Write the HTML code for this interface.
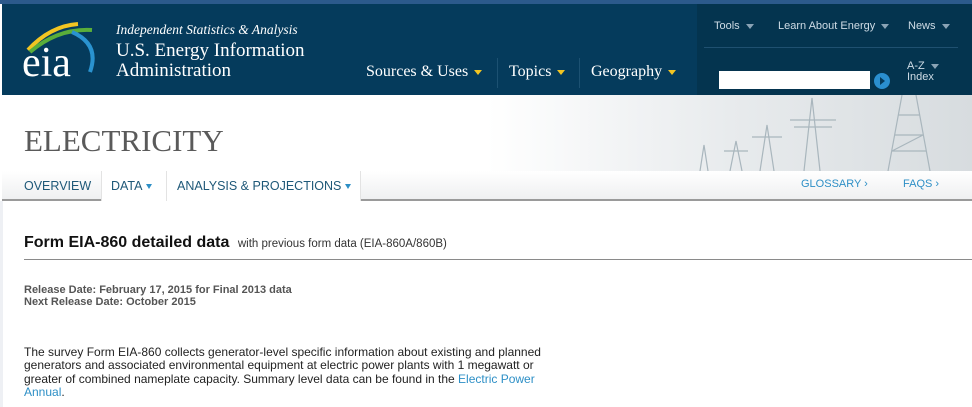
<!DOCTYPE html>
<html><head><style>
*{margin:0;padding:0;box-sizing:border-box}
body{width:972px;height:407px;overflow:hidden;background:#fff;font-family:"Liberation Sans",Arial,sans-serif;position:relative}
.top{position:absolute;left:0;top:0;width:972px;height:4px;background:#2c5a8c}
.hdr{position:absolute;left:2px;top:4px;width:970px;height:91px;background:#053b5c}
.rp{position:absolute;left:697px;top:4px;width:275px;height:91px;background:#04344f}
.serif{font-family:"Liberation Serif",Georgia,serif;color:#fff;position:absolute}
.tri{display:inline-block;width:0;height:0;border-left:4px solid transparent;border-right:4px solid transparent;border-top:5px solid #f2c522;vertical-align:middle;margin-left:6px}
.trig{border-top-color:#8aa3b5}
.s{position:absolute;color:#cfdce6;font-size:11px}
.banner{position:absolute;left:2px;top:95px;width:970px;height:76px;background:linear-gradient(90deg,#fff 0,#fff 50%,#e8ebed 75%,#d7dcdf 100%)}
.nav{position:absolute;left:2px;top:171px;width:970px;height:30px;background:linear-gradient(#fff,#eff0f1);border-bottom:2px solid #9a9a9a;font-size:12.5px;color:#1e5878}
.nav span{position:absolute;top:8px}
.bt{display:inline-block;border-left:3.5px solid transparent;border-right:3.5px solid transparent;border-top:5px solid #2d8fc6;margin-left:4px;vertical-align:middle}
</style></head><body>
<div class="top"></div>
<div class="hdr"></div>
<div class="rp"></div>
<svg style="position:absolute;left:20px;top:18px" width="80" height="62">
<path d="M8 32 Q30 8 58 6" stroke="#f2c522" stroke-width="4" fill="none"/>
<path d="M10 34 Q38 10 72 12" stroke="#5aae3a" stroke-width="4" fill="none"/>
<path d="M52 14 Q80 26 70 54" stroke="#2a93d0" stroke-width="4" fill="none"/>
<text x="2" y="58" font-family="Liberation Serif" font-size="42" fill="#fff">eia</text>
</svg>
<div class="serif" style="left:116px;top:22px;font-size:13.5px;font-style:italic">Independent Statistics &amp; Analysis</div>
<div class="serif" style="left:116px;top:41px;font-size:19px;line-height:20px">U.S. Energy Information<br>Administration</div>
<div class="serif" style="left:366px;top:63px;font-size:16px">Sources &amp; Uses<span class="tri"></span></div>
<div style="position:absolute;left:497px;top:58px;width:1px;height:30px;background:#1c5172"></div>
<div class="serif" style="left:509px;top:63px;font-size:16px">Topics<span class="tri"></span></div>
<div style="position:absolute;left:579px;top:58px;width:1px;height:30px;background:#1c5172"></div>
<div class="serif" style="left:591px;top:63px;font-size:16px">Geography<span class="tri"></span></div>
<div class="s" style="left:714px;top:20px">Tools<span class="tri trig"></span></div>
<div class="s" style="left:778px;top:20px">Learn About Energy<span class="tri trig"></span></div>
<div class="s" style="left:908px;top:20px">News<span class="tri trig"></span></div>
<div style="position:absolute;left:704px;top:47px;width:254px;height:1px;background:#1f5070"></div>
<div style="position:absolute;left:719px;top:71px;width:151px;height:18px;background:#fff"></div>
<div style="position:absolute;left:874px;top:73px;width:16px;height:16px;border-radius:50%;background:#2a8fd0"></div>
<div style="position:absolute;left:880px;top:77px;width:0;height:0;border-top:4px solid transparent;border-bottom:4px solid transparent;border-left:5px solid #053b5c"></div>
<div class="s" style="left:907px;top:61px;line-height:11px">A-Z<span class="tri trig"></span><br>Index</div>
<div class="banner"></div>
<svg style="position:absolute;left:680px;top:95px" width="292" height="76" stroke="#a9b6bd" fill="none" stroke-width="1.2">
<path d="M50 76 L56 46 L62 76 M44 56 L68 56"/>
<path d="M80 76 L87 30 L94 76 M72 42 L102 42"/>
<path d="M124 76 L132 3 L140 76 M110 25 L156 25 M114 32 L152 32"/>
<path d="M208 76 L222 0 M236 0 L250 76 M212 56 L246 56 M215 40 L243 40 M218 20 L240 20 M212 56 L243 40"/>
<path d="M20 76 L24 50 L28 76"/>
</svg>
<div style="position:absolute;left:24px;top:123px;font-family:'Liberation Serif',serif;font-size:31px;color:#5a5a5a">ELECTRICITY</div>
<div class="nav">
<span style="left:22px">OVERVIEW</span>
<div style="position:absolute;left:99px;top:0;width:66px;height:30px;background:#fff;border-left:1px solid #e3e3e3;border-right:1px solid #e3e3e3"></div>
<span style="left:109px">DATA<i class="bt"></i></span>
<div style="position:absolute;left:165px;top:0;width:194px;height:30px;background:#fff;border-right:1px solid #e3e3e3"></div>
<span style="left:175px">ANALYSIS &amp; PROJECTIONS<i class="bt"></i></span>
<span style="left:799px;font-size:11px;color:#2d8fc6;top:7px">GLOSSARY ›</span>
<span style="left:901px;font-size:11px;color:#2d8fc6;top:7px">FAQS ›</span>
</div>
<div style="position:absolute;left:0;top:201px;width:3px;height:206px;background:#eef0f4"></div>
<div style="position:absolute;left:24px;top:234px;font-size:16px;font-weight:bold;color:#111">Form EIA-860 detailed data <span style="font-size:11.5px;font-weight:normal;color:#333;margin-left:4px">with previous form data (EIA-860A/860B)</span></div>
<div style="position:absolute;left:24px;top:259px;width:948px;height:1px;background:#8a8a8a"></div>
<div style="position:absolute;left:24px;top:284px;font-size:11px;font-weight:bold;color:#555;line-height:12px">Release Date: February 17, 2015 for Final 2013 data<br>Next Release Date: October 2015</div>
<div style="position:absolute;left:24px;top:346px;width:534px;font-size:12px;color:#222;line-height:13.3px">The survey Form EIA-860 collects generator-level specific information about existing and planned generators and associated environmental equipment at electric power plants with 1 megawatt or greater of combined nameplate capacity. Summary level data can be found in the <span style="color:#2d8fc6">Electric Power Annual</span>.</div>
</body></html>
